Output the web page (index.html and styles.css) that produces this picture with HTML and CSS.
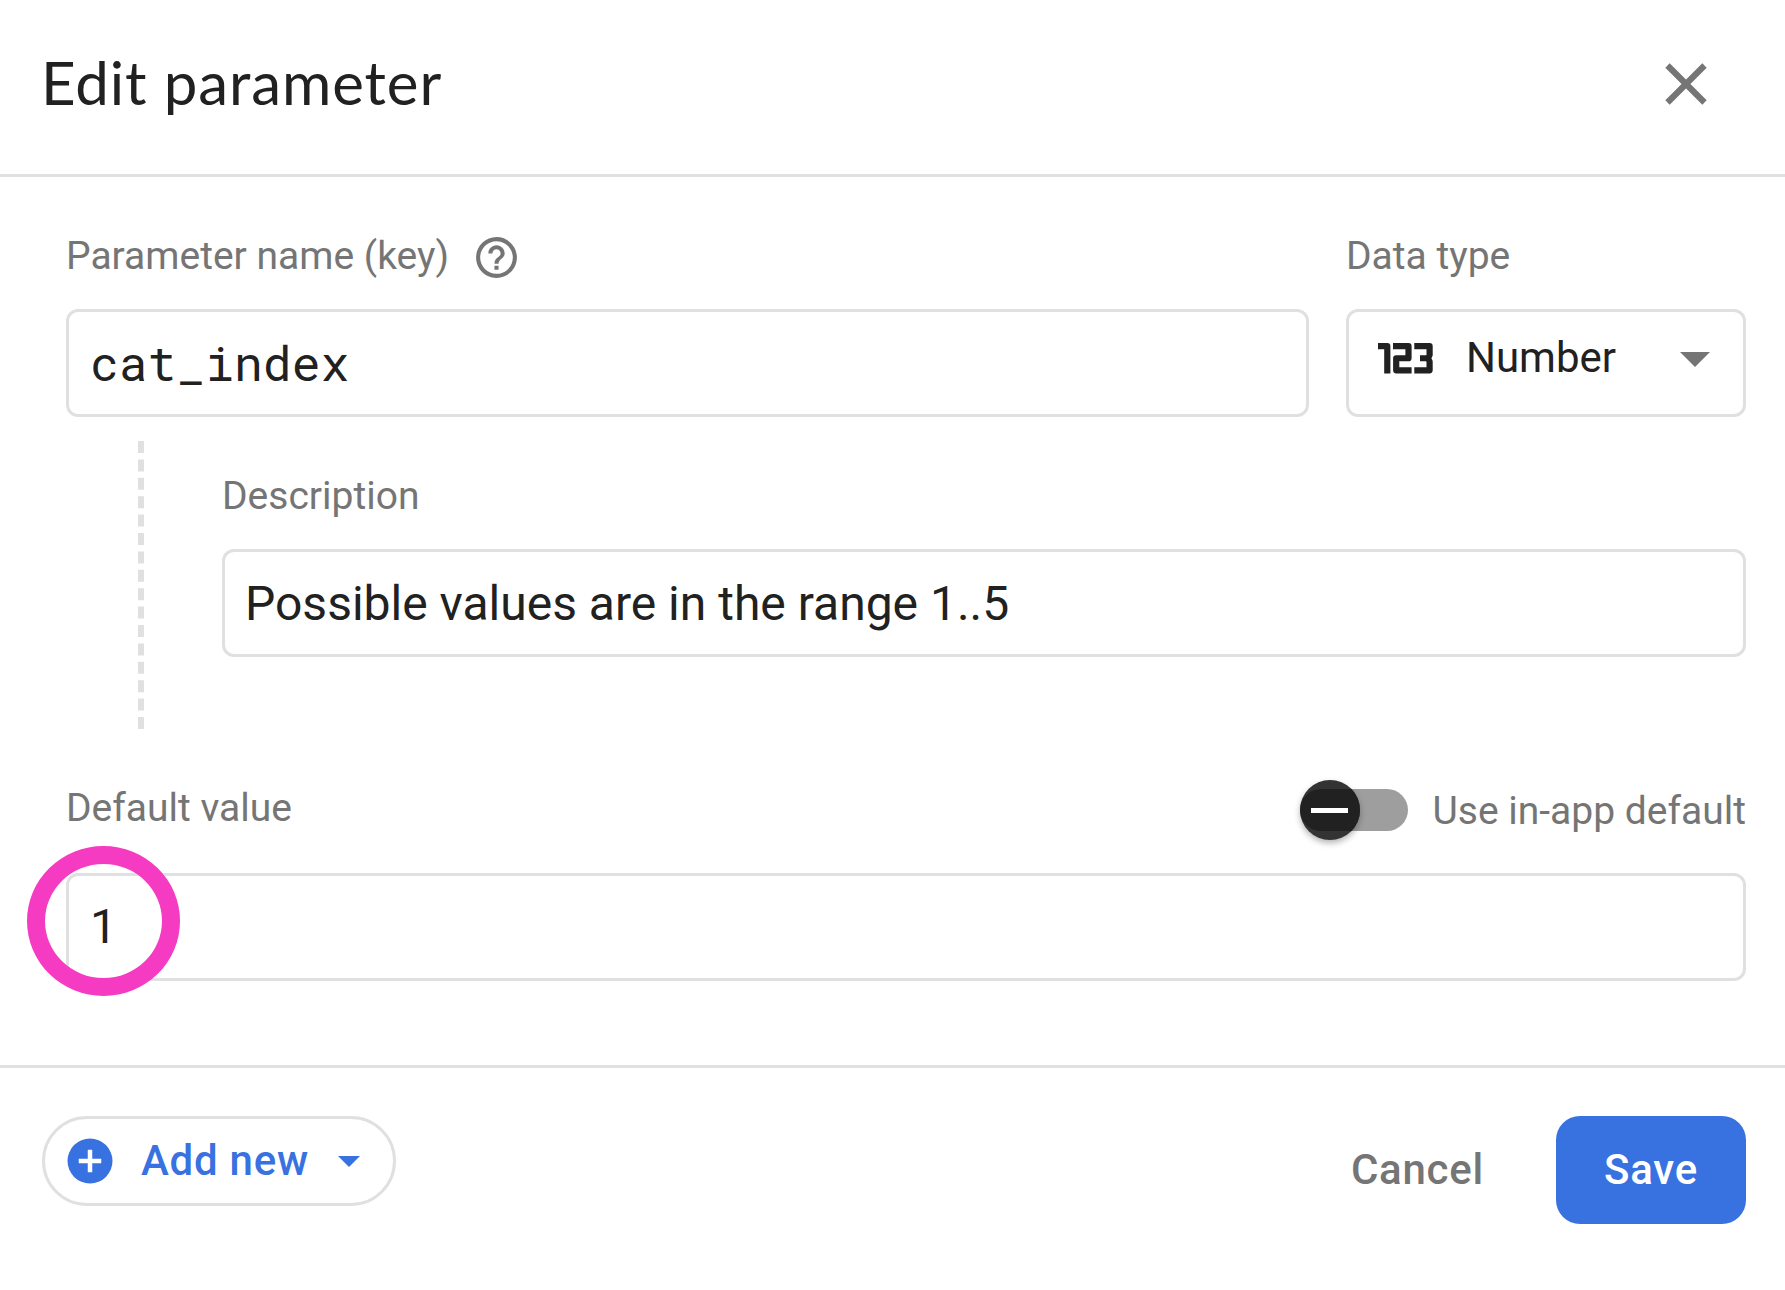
FILE: index.html
```html
<!DOCTYPE html>
<html lang="en">
<head>
<meta charset="utf-8">
<title>Edit parameter</title>
<link rel="stylesheet" href="styles.css">
</head>
<body>
<div class="dialog">
  <header class="header">
    <h1 class="title">Edit parameter</h1>
    <button class="close" aria-label="Close">
      <svg viewBox="0 0 42 42" width="42" height="42"><path d="M2.500 2.500L39.500 39.500M39.500 2.500L2.500 39.500" fill="none" stroke="#757575" stroke-width="6.200"/></svg>
    </button>
  </header>
  <main class="content">
    <div class="row">
      <div class="field name-field">
        <div class="label"><span>Parameter name (key)</span>
          <svg class="help" viewBox="0 0 24 24" width="49" height="49"><path fill="#757575" d="M11 18h2v-2h-2v2zm1-16C6.480 2 2 6.480 2 12s4.480 10 10 10 10-4.480 10-10S17.520 2 12 2zm0 18c-4.410 0-8-3.590-8-8s3.590-8 8-8 8 3.590 8 8-3.590 8-8 8zm0-14c-2.210 0-4 1.790-4 4h2c0-1.100.9-2 2-2s2 .9 2 2c0 2-3 1.750-3 5h2c0-2.250 3-2.500 3-5 0-2.210-1.790-4-4-4z"/></svg>
        </div>
        <div class="box mono">cat_index</div>
      </div>
      <div class="field type-field">
        <div class="label">Data type</div>
        <div class="box select">
          <svg class="num-icon" viewBox="0 0 55 31" width="55" height="31"><path d="M0 3.150H9.300V30.500M15 3.150H30.500V15.250H18.200V27.350H33.600M36.300 3.150H51.600V12L50 15.250L51.600 18.500V27.350H36.300M42 15.250H50" fill="none" stroke="#212121" stroke-width="6.200" stroke-linejoin="round"/></svg>
          <span class="select-text">Number</span>
          <svg class="select-caret" viewBox="0 0 30 15" width="30" height="15"><path d="M0 0H30L15 15z" fill="#757575"/></svg>
        </div>
      </div>
    </div>
    <div class="nested">
      <div class="thread"></div>
      <div class="field desc-field">
        <div class="label">Description</div>
        <div class="box desc-box">Possible values are in the range 1..5</div>
      </div>
    </div>
    <div class="value-head">
      <div class="label">Default value</div>
      <div class="toggle">
        <div class="track"><div class="thumb"></div></div>
        <span class="toggle-label">Use in-app default</span>
      </div>
    </div>
    <div class="box value-box">1<div class="highlight"></div></div>
  </main>
  <footer class="footer">
    <button class="add">
      <svg class="plus" viewBox="0 0 24 24" width="54" height="54"><circle cx="12" cy="12" r="10" fill="#3871e0"/><path d="M12 7v10M7 12h10" stroke="#fff" stroke-width="2"/></svg>
      <span class="add-text">Add new</span>
      <svg class="add-caret" viewBox="0 0 22 11" width="22" height="11"><path d="M0 0H22L11 11z" fill="#3871e0"/></svg>
    </button>
    <div class="actions">
      <button class="cancel">Cancel</button>
      <button class="save">Save</button>
    </div>
  </footer>
</div>
</body>
</html>
```
FILE: styles.css
```css
* { box-sizing: border-box; }
body { margin: 0; background: #fff; color: #212121; font-family: Roboto, "Liberation Sans", sans-serif; }
button { border: 0; padding: 0; background: none; font: inherit; letter-spacing: inherit; color: inherit; }
svg { display: block; flex: none; }
.dialog { width: 1785px; height: 1290px; display: flex; flex-direction: column; overflow: hidden; }

.header { height: 177px; border-bottom: 3px solid #e0e0e0; padding: 0 78px 6px 42px; display: flex; justify-content: space-between; align-items: center; }
.title { margin: 0 0 0 -1px; padding-bottom: 4px; font: 400 60px/72px Lato, sans-serif; letter-spacing: 0.9px; white-space: nowrap; }

.content { height: 888px; padding: 57px 39px 0 66px; }
.row { display: flex; gap: 37px; }
.name-field { flex: 1; }
.type-field { width: 400px; }
.label { display: flex; align-items: center; height: 42px; margin-bottom: 33px; padding-top: 1px; font-size: 39px; line-height: 42px; color: #757575; white-space: nowrap; }
.help { margin: 4px 0 0 23px; }
.box { height: 108px; border: 3px solid #e0e0e0; border-radius: 12px; padding: 0 21px; font-size: 48px; line-height: 102px; white-space: nowrap; }
.mono { font-family: "Roboto Mono", "Liberation Mono", monospace; }
.desc-box { padding-left: 20px; line-height: 103px; }
.select { display: flex; align-items: center; padding: 0 33px 10px 29px; font-size: 42px; }
.select-text { margin-left: 33px; }
.select-caret { margin-left: auto; margin-top: 3px; }

.nested { display: flex; padding: 24px 0 0 72px; }
.thread { width: 6px; height: 288px; border-left: 6px dashed #e0e0e0; }
.desc-field { flex: 1; margin-left: 78px; padding-top: 33px; }

.value-head { display: flex; justify-content: space-between; height: 144px; padding-top: 51px; }
.value-head .label { height: 48px; padding-top: 7px; }
.toggle { display: flex; align-items: center; height: 60px; gap: 25px; font-size: 39px; color: #757575; white-space: nowrap; }
.toggle-label { padding-top: 1px; }
.track { width: 108px; height: 42px; border-radius: 21px; background: #9e9e9e; display: flex; align-items: center; }
.thumb { position: relative; flex: none; width: 60px; height: 60px; border-radius: 50%; overflow: hidden; background: #333; display: flex; align-items: center; justify-content: center; box-shadow: 0 3px 6px rgba(0,0,0,.3); }
.thumb::before { content: ""; position: absolute; inset: 9px 0; border-radius: 21px 0 0 21px; background: #212121; }
.thumb::after { content: ""; position: relative; width: 37px; height: 5px; background: #fff; }
.value-box { position: relative; }
.highlight { position: absolute; left: -42px; top: -30px; width: 153px; height: 150px; border: 18px solid #f63bc3; border-radius: 50%; }

.footer { flex: 1; border-top: 3px solid #e0e0e0; padding: 48px 39px 0 42px; display: flex; justify-content: space-between; align-items: flex-start; font-size: 42px; font-weight: 500; letter-spacing: 0.75px; }
.add { width: 354px; height: 90px; border: 3px solid #e0e0e0; border-radius: 45px; padding-left: 18px; display: flex; align-items: center; color: #3871e0; }
.add-text { margin-left: 24px; padding-bottom: 2px; }
.add-caret { margin-left: 29px; }
.actions { display: flex; gap: 72px; }
.cancel { color: #757575; padding-bottom: 2px; }
.save { width: 190px; height: 108px; border-radius: 24px; padding-bottom: 2px; background: #3871e0; color: #fff; }
```
